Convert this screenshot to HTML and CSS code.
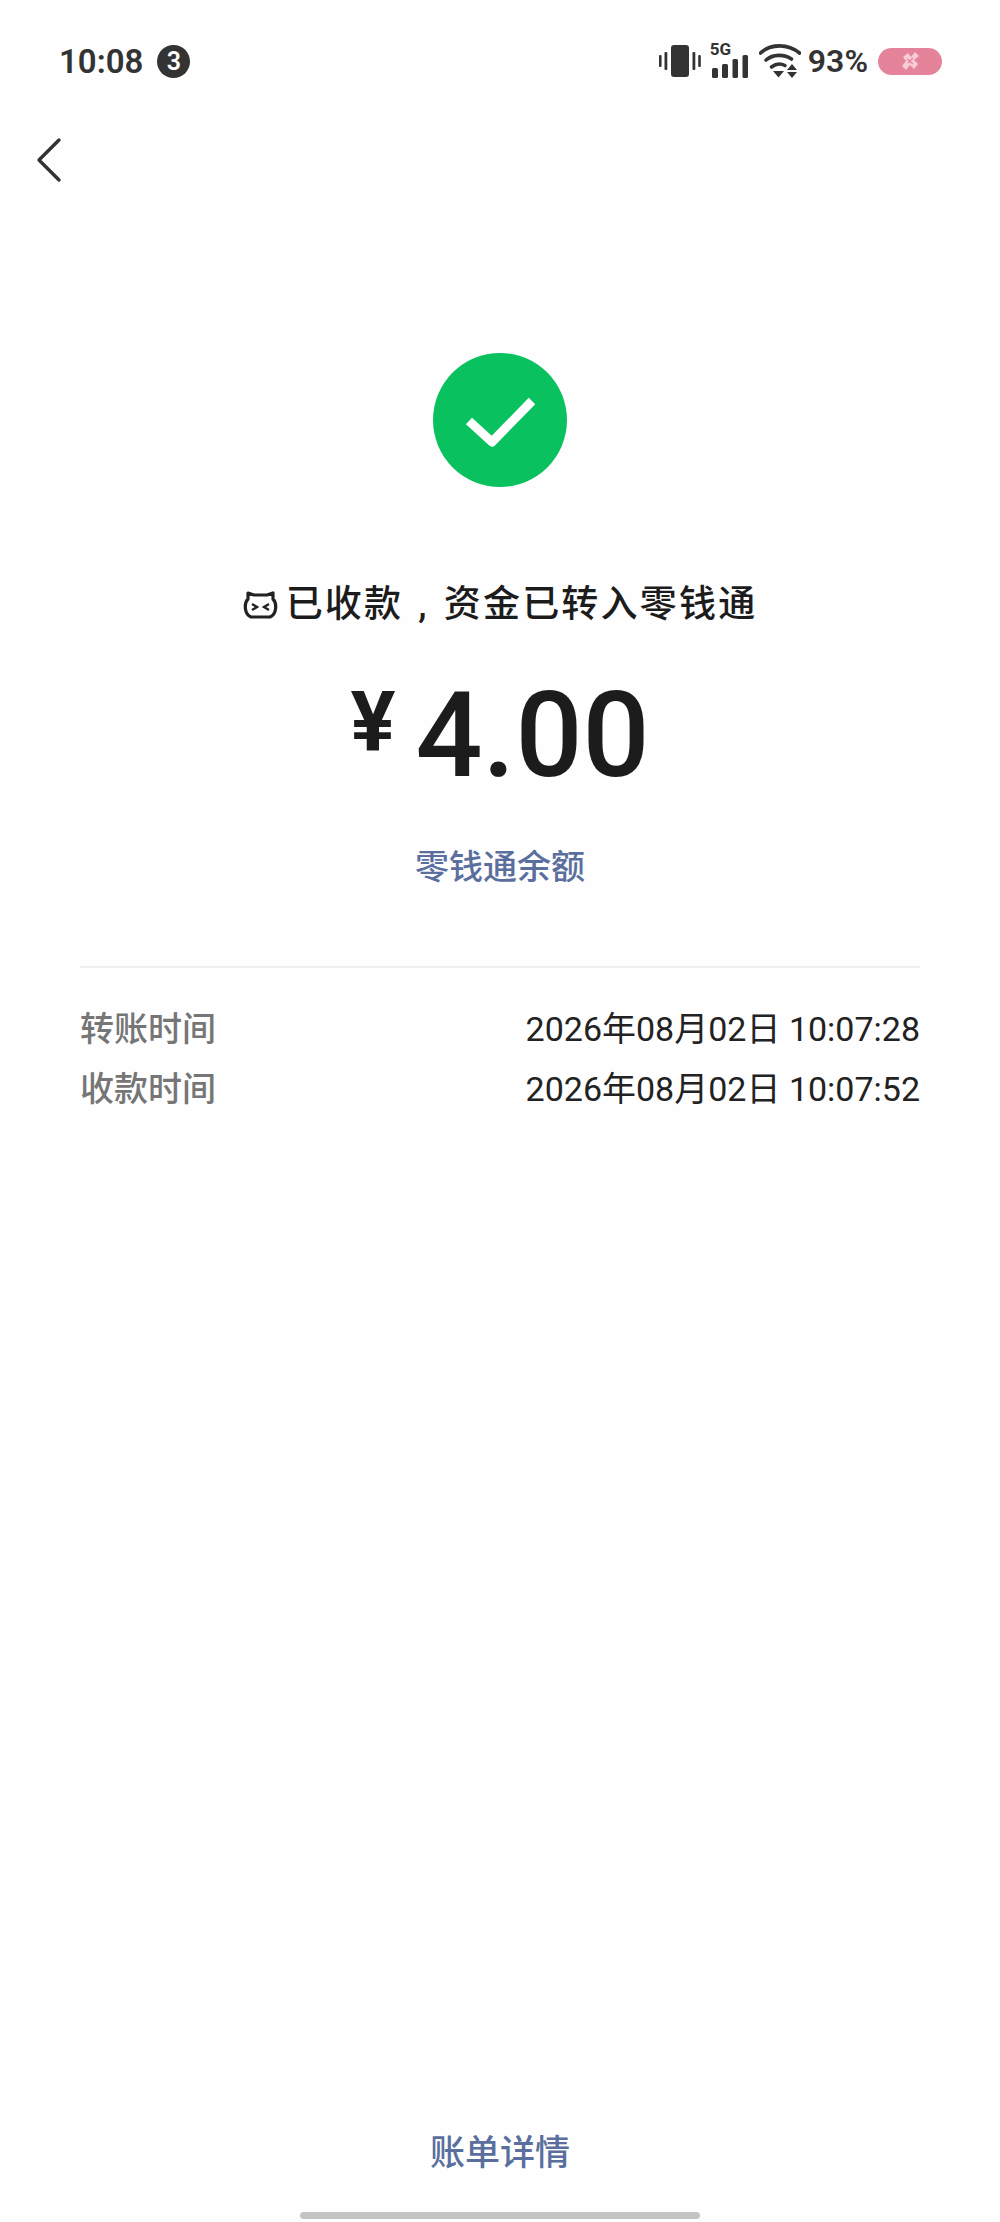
FILE: index.html
```html
<!DOCTYPE html>
<html lang="zh-CN">
<head>
    <meta charset="UTF-8">
    <meta name="viewport" content="width=device-width, initial-scale=1.0">
    <title>已收款</title>
    <link rel="stylesheet" href="styles.css">
</head>
<body>
    <div class="page">
        <div class="status">
            <span class="time">10:08</span>
            <span class="badge">3</span>
            <div class="status-right">
                <svg class="ico-vib" width="42" height="34" viewBox="0 0 42 34">
                    <rect x="12" y="1" width="18" height="32" rx="3" fill="#333"/>
                    <rect x="0" y="11" width="2.6" height="12" rx="1" fill="#333"/>
                    <rect x="5.5" y="8" width="2.8" height="18" rx="1" fill="#333"/>
                    <rect x="33.5" y="8" width="2.8" height="18" rx="1" fill="#333"/>
                    <rect x="39.2" y="11" width="2.6" height="12" rx="1" fill="#333"/>
                </svg>
                <div class="signal">
                    <span class="five-g">5G</span>
                    <svg width="38" height="34" viewBox="0 0 38 34">
                        <rect x="2" y="24" width="6" height="10" rx="1.5" fill="#333"/>
                        <rect x="12" y="20" width="6" height="14" rx="1.5" fill="#333"/>
                        <rect x="22.5" y="15" width="5.5" height="19" rx="1.5" fill="#333"/>
                        <rect x="32.5" y="11" width="5.5" height="23" rx="1.5" fill="#333"/>
                    </svg>
                </div>
                <svg class="ico-wifi" width="42" height="34" viewBox="0 0 42 34">
                    <path d="M1.5 9C12 -0.5 29 -0.5 40.5 9" fill="none" stroke="#333" stroke-width="3.6" stroke-linecap="round"/>
                    <path d="M7 16C14 10 25 10 32.5 15" fill="none" stroke="#333" stroke-width="3.6" stroke-linecap="round"/>
                    <path d="M12.5 23C17 19.5 22 19.5 26 21.5" fill="none" stroke="#333" stroke-width="3.6" stroke-linecap="round"/>
                    <path d="M14 27H25L19.5 33.5Z" fill="#333"/>
                    <path d="M33 20L38 26H28Z M28 28H38L33 34Z" fill="#333"/>
                </svg>
                <span class="pct">93%</span>
                <div class="battery">
                    <svg class="bolt" width="20" height="20" viewBox="0 0 20 20">
                        <path d="M3 6L8 2L11 6L15 1L19 5L14 9L18 13L14 18L10 14L6 19L2 15L6 10Z" fill="#f7ccd6"/>
                        <path d="M7 8L13 13M13 7L8 12" fill="none" stroke="#e5839b" stroke-width="1.2"/>
                    </svg>
                </div>
            </div>
        </div>

        <div class="nav">
            <svg width="26" height="46" viewBox="0 0 26 46">
                <path d="M23 3L3 23L23 43" fill="none" stroke="#333" stroke-width="3.4" stroke-linecap="round" stroke-linejoin="round"/>
            </svg>
        </div>

        <div class="result">
            <div class="ok">
                <svg width="74" height="56" viewBox="0 0 74 56">
                    <path d="M6 29L29 50L69 9" fill="none" stroke="#fff" stroke-width="9" stroke-linejoin="round"/>
                </svg>
            </div>
            <div class="title">
                <svg class="cat" width="35" height="30" viewBox="0 0 35 30">
                    <path d="M5 9V3L11 5H24L30 3V9C34 13 34 24 27 27H8C1 24 1 13 5 9Z" fill="none" stroke="#222" stroke-width="3.2" stroke-linejoin="round"/>
                    <path d="M9 14L14 17L9 20M26 14L21 17L26 20" fill="none" stroke="#222" stroke-width="2.4"/>
                    <path d="M1 16H4M31 16H34" fill="none" stroke="#222" stroke-width="2.4"/>
                </svg>
                <span>已收款<span class="comma">&#44;</span>资金已转入零钱通</span>
            </div>
            <div class="amount">
                <span class="yen">¥</span>
                <span class="num">4.00</span>
            </div>
            <a class="link">零钱通余额</a>
        </div>

        <div class="info">
            <div class="row">
                <span class="label">转账时间</span>
                <span class="val">2026年08月02日 10:07:28</span>
            </div>
            <div class="row">
                <span class="label">收款时间</span>
                <span class="val">2026年08月02日 10:07:52</span>
            </div>
        </div>

        <div class="bottom">
            <a class="link detail">账单详情</a>
            <div class="home"></div>
        </div>
    </div>
</body>
</html>
```

FILE: styles.css
```css
* { margin: 0; padding: 0; box-sizing: border-box; }
body {
    width: 1000px;
    height: 2222px;
    background-color: #fefefe;
    font-family: Roboto, "Noto Sans CJK SC", sans-serif;
    color: #222;
    overflow: hidden;
}
.page {
    height: 2222px;
    display: flex;
    flex-direction: column;
}
.status {
    height: 122px;
    padding: 0 58px 0 59px;
    display: flex;
    align-items: center;
}
.time {
    font-size: 33px;
    font-weight: 600;
    color: #333;
}
.badge {
    width: 33px;
    height: 33px;
    margin-left: 14px;
    border-radius: 50%;
    background-color: #333;
    color: #fff;
    font-size: 25px;
    font-weight: 600;
    display: flex;
    align-items: center;
    justify-content: center;
}
.status-right {
    margin-left: auto;
    display: flex;
    align-items: center;
}
.signal {
    margin-left: 9px;
    position: relative;
    width: 39px;
    height: 34px;
}
.five-g {
    position: absolute;
    left: 0;
    top: -5px;
    font-size: 17px;
    font-weight: 700;
    color: #333;
}
.ico-wifi { margin-left: 10px; }
.pct {
    margin-left: 7px;
    font-size: 32px;
    font-weight: 600;
    color: #333;
}
.battery {
    width: 64px;
    height: 27px;
    margin-left: 10px;
    border-radius: 14px;
    background-color: #e5839b;
    display: flex;
    align-items: center;
    justify-content: center;
}
.bolt { filter: blur(0.6px); }
.nav {
    height: 50px;
    padding: 15px 0 0 36px;
}
.result {
    margin-top: 181px;
    display: flex;
    flex-direction: column;
    align-items: center;
}
.ok {
    width: 134px;
    height: 134px;
    border-radius: 50%;
    background-color: #0ac160;
    display: flex;
    align-items: center;
    justify-content: center;
}
.title {
    margin-top: 93px;
    display: flex;
    align-items: center;
    font-size: 37px;
    font-weight: 500;
    letter-spacing: 2.2px;
    line-height: 50px;
    color: #1c1c1c;
}
.cat { margin-right: 8px; }
.comma { margin: 0 15px; }
.amount {
    margin-top: 38px;
    display: flex;
    align-items: flex-start;
    font-weight: 500;
    color: #1c1c1c;
}
.yen {
    margin-top: 5px;
    font-size: 84px;
    line-height: 100px;
    font-weight: 700;
}
.num {
    margin-left: 20px;
    font-size: 118px;
    line-height: 136px;
}
.link {
    font-size: 34px;
    font-weight: 500;
    color: #5a6f9e;
}
.result .link { margin-top: 36px; }
.info {
    margin: 77px 80px 0;
    padding-top: 28px;
    border-top: 2px solid #eeeeee;
}
.row {
    height: 60px;
    display: flex;
    align-items: center;
    justify-content: space-between;
    font-size: 34px;
}
.label {
    font-size: 34px;
    font-weight: 500;
    color: #767676;
}
.val { color: #222; }
.detail { font-size: 35px; }
.bottom {
    margin-top: auto;
    display: flex;
    flex-direction: column;
    align-items: center;
}
.home {
    width: 400px;
    height: 7px;
    margin: 37px 0 3px;
    border-radius: 4px;
    background-color: #c4c4c4;
}
```
